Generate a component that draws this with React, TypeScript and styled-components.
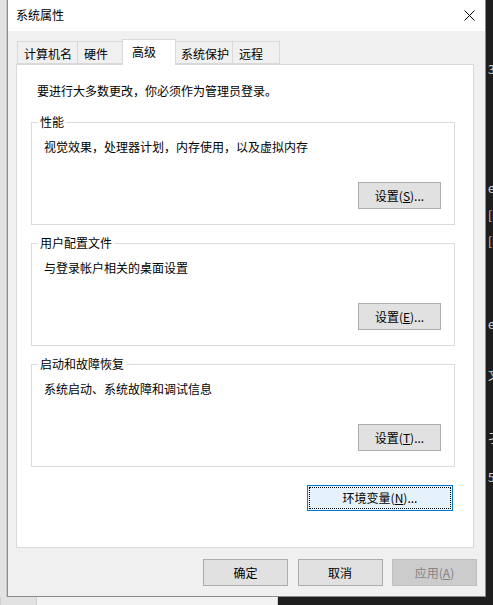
import React from 'react';
import styled, { createGlobalStyle } from 'styled-components';

const GlobalStyle = createGlobalStyle`
  html, body {
    margin: 0;
    padding: 0;
  }
  body {
    width: 493px;
    height: 605px;
    overflow: hidden;
    font-family: "Noto Sans CJK SC", "Microsoft YaHei", sans-serif;
    font-size: 12px;
    color: #000;
    background: #1e1e1e;
  }
`;

const Screen = styled.div`
  display: grid;
  grid-template-columns: 7px 479px 1fr;
  grid-template-rows: 597px 8px;
  width: 493px;
  height: 605px;
`;

const LeftEdge = styled.div`
  background: #e3e3e3;
  border-right: 1px solid #c8c8c8;
`;

const BackWindow = styled.div`
  background: #1e1e1e;
  overflow: hidden;
  display: flex;
  flex-direction: column;
  padding-left: 2px;
`;

const Fragment = styled.span<{ $gap: number }>`
  margin-top: ${(p) => p.$gap}px;
  height: 14px;
  line-height: 14px;
  color: #d4d4d4;
  font-size: 12px;
  white-space: nowrap;
`;

const BottomStrip = styled.div`
  grid-column: 1 / 4;
  display: flex;
`;

const StripPart = styled.div<{ $w?: number; $bg: string }>`
  ${(p) => (p.$w ? `width: ${p.$w}px;` : 'flex: 1;')}
  background: ${(p) => p.$bg};
  border-left: 1px solid #cfcfcf;
`;

const Dialog = styled.div`
  box-sizing: border-box;
  display: flex;
  flex-direction: column;
  border: 1px solid #8c8c8c;
  border-top: none;
  background: #f0f0f0;
`;

const TitleBar = styled.div`
  height: 31px;
  background: #fff;
  display: flex;
  align-items: center;
  justify-content: space-between;
  padding: 0 10px 0 8px;
`;

const Title = styled.span`
  line-height: 16px;
  margin-top: -1px;
`;

const Body = styled.div`
  flex: 1;
  display: flex;
  flex-direction: column;
  padding: 8px 11px 0 8px;
`;

const TabRow = styled.div`
  height: 25px;
  display: flex;
  align-items: flex-end;
  padding-left: 1px;
  position: relative;
  z-index: 1;
`;

const Tab = styled.div<{ $w: number; $active?: boolean; $shift?: number }>`
  box-sizing: border-box;
  width: ${(p) => p.$w}px;
  height: ${(p) => (p.$active ? 26 : 23)}px;
  margin-left: ${(p) => p.$shift ?? -1}px;
  margin-bottom: ${(p) => (p.$active ? -1 : 0)}px;
  padding: ${(p) => (p.$active ? '4px 0 0 9px' : '4px 0 0 6px')};
  line-height: 16px;
  background: ${(p) => (p.$active ? '#fff' : '#f0f0f0')};
  border: 1px solid #d9d9d9;
  border-bottom: ${(p) => (p.$active ? 'none' : '1px solid #d9d9d9')};
  position: relative;
  z-index: ${(p) => (p.$active ? 2 : 1)};
  white-space: nowrap;
`;

const Panel = styled.div`
  height: 484px;
  box-sizing: border-box;
  background: #fff;
  border: 1px solid #d9d9d9;
  display: flex;
  flex-direction: column;
  padding: 18px 18px 0 14px;
`;

const Notice = styled.div`
  line-height: 16px;
  margin-left: 6px;
  margin-bottom: 15px;
`;

const Group = styled.fieldset`
  margin: 0 0 10px 0;
  padding: 0;
  min-width: 0;
  border: 1px solid #dcdcdc;
  display: flex;
  flex-direction: column;
`;

const Legend = styled.legend`
  margin-left: 6px;
  padding: 0 2px;
  line-height: 16px;
  font-size: 12px;
`;

const GroupBody = styled.div`
  display: flex;
  flex-direction: column;
  padding: 9px 13px 15px 12px;
`;

const Description = styled.div`
  line-height: 16px;
  margin-bottom: 27px;
`;

const ButtonRow = styled.div<{ $pad?: number; $top?: number }>`
  display: flex;
  justify-content: flex-end;
  padding-right: ${(p) => p.$pad ?? 0}px;
  margin-top: ${(p) => p.$top ?? 0}px;
`;

const Button = styled.button<{ $w: number; $h?: number }>`
  box-sizing: border-box;
  width: ${(p) => p.$w}px;
  height: ${(p) => p.$h ?? 27}px;
  padding: 0;
  margin: 0;
  font-family: inherit;
  font-size: 12px;
  line-height: 16px;
  color: #000;
  background: #e1e1e1;
  border: 1px solid #adadad;
  border-radius: 0;

  &:disabled {
    background: #cccccc;
    border-color: #bfbfbf;
    color: #838383;
  }
`;

const FocusButton = styled(Button)`
  background: #e5f1fb;
  border-color: #0078d7;
  padding: 1px;
  display: flex;
`;

const FocusRing = styled.span`
  flex: 1;
  display: flex;
  align-items: center;
  justify-content: center;
  border: 1px dotted #000;
`;

const Footer = styled.div`
  display: flex;
  justify-content: flex-end;
  gap: 9.5px;
  margin: 11px -3px 10px 0;
`;

function CloseIcon() {
  return (
    <svg width="11" height="11" viewBox="0 0 11 11">
      <path d="M0.5 0.5 L10.5 10.5 M10.5 0.5 L0.5 10.5" stroke="#000" strokeWidth="1" fill="none" />
    </svg>
  );
}

const groups = [
  { title: '性能', text: '视觉效果，处理器计划，内存使用，以及虚拟内存', key: 'S' },
  { title: '用户配置文件', text: '与登录帐户相关的桌面设置', key: 'E' },
  { title: '启动和故障恢复', text: '系统启动、系统故障和调试信息', key: 'T' },
];

const fragments = [
  { gap: 62, text: '3|' },
  { gap: 105, text: 'ev' },
  { gap: 13, text: '[|' },
  { gap: 12, text: '[L' },
  { gap: 69, text: 'ev' },
  { gap: 37, text: '文' },
  { gap: 49, text: '孑' },
  { gap: 25, text: '5' },
];

export default function App() {
  return (
    <>
      <GlobalStyle />
      <Screen>
        <LeftEdge />
        <Dialog>
          <TitleBar>
            <Title>系统属性</Title>
            <CloseIcon />
          </TitleBar>
          <Body>
            <TabRow>
              <Tab $w={61} $shift={0}>计算机名</Tab>
              <Tab $w={48}>硬件</Tab>
              <Tab $w={54} $active $shift={-3}>高级</Tab>
              <Tab $w={59} $shift={-2}>系统保护</Tab>
              <Tab $w={48}>远程</Tab>
            </TabRow>
            <Panel>
              <Notice>要进行大多数更改，你必须作为管理员登录。</Notice>
              {groups.map((g) => (
                <Group key={g.key}>
                  <Legend>{g.title}</Legend>
                  <GroupBody>
                    <Description>{g.text}</Description>
                    <ButtonRow>
                      <Button $w={83}>
                        设置(<u>{g.key}</u>)...
                      </Button>
                    </ButtonRow>
                  </GroupBody>
                </Group>
              ))}
              <ButtonRow $pad={2} $top={8}>
                <FocusButton $w={146} $h={26}>
                  <FocusRing>
                    环境变量(<u>N</u>)...
                  </FocusRing>
                </FocusButton>
              </ButtonRow>
            </Panel>
            <Footer>
              <Button $w={85}>确定</Button>
              <Button $w={85}>取消</Button>
              <Button $w={85} disabled>
                应用(<u>A</u>)
              </Button>
            </Footer>
          </Body>
        </Dialog>
        <BackWindow>
          {fragments.map((f, i) => (
            <Fragment key={i} $gap={f.gap}>
              {f.text}
            </Fragment>
          ))}
        </BackWindow>
        <BottomStrip>
          <StripPart $w={35} $bg="#e2e2e2" />
          <StripPart $w={240} $bg="#f3f3f3" />
          <StripPart $bg="#1e1e1e" />
        </BottomStrip>
      </Screen>
    </>
  );
}
